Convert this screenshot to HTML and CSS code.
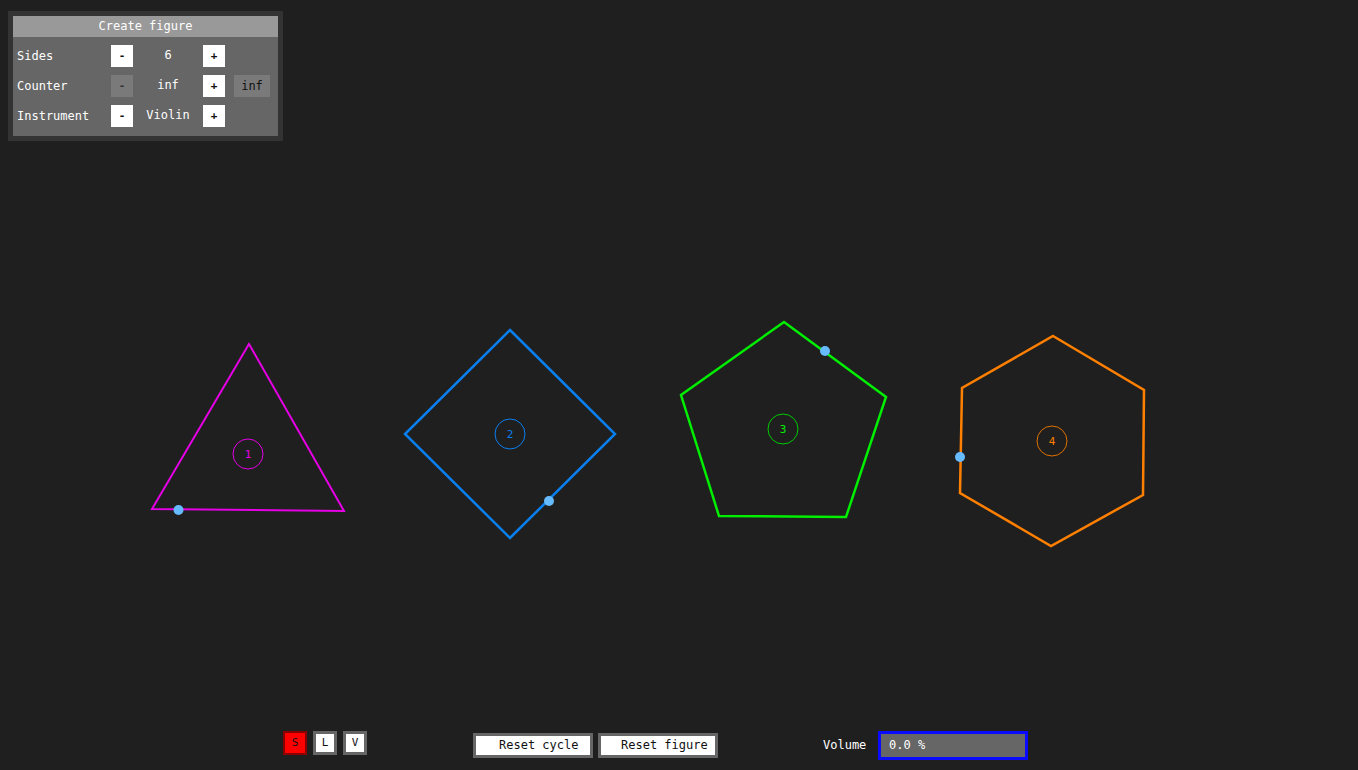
FILE: index.html
```html
<!DOCTYPE html>
<html>
<head>
<meta charset="utf-8">
<link rel="stylesheet" href="styles.css">
</head>
<body>
<div class="app">
  <svg class="stage" width="1358" height="770" viewBox="0 0 1358 770">
    <g class="fig">
      <polygon points="249,344 344,511 152,509" fill="none" stroke="#e600e6" stroke-width="2"/>
      <circle cx="248" cy="454" r="15" fill="none" stroke="#e600e6" stroke-width="1"/>
      <text x="248" y="458" fill="#e600e6" text-anchor="middle">1</text>
      <circle cx="178.5" cy="510" r="5" fill="#66bbff"/>
    </g>
    <g class="fig">
      <polygon points="510,330 615,434 510,538 405,434" fill="none" stroke="#0a7ff0" stroke-width="2.5"/>
      <circle cx="510" cy="434" r="15" fill="none" stroke="#0a7ff0" stroke-width="1"/>
      <text x="510" y="438" fill="#0a7ff0" text-anchor="middle">2</text>
      <circle cx="549" cy="501" r="5" fill="#66bbff"/>
    </g>
    <g class="fig">
      <polygon points="784,322 886,397 846,517 719,516 681,395" fill="none" stroke="#00ee00" stroke-width="2.5"/>
      <circle cx="783" cy="429" r="15" fill="none" stroke="#00cc00" stroke-width="1"/>
      <text x="783" y="433" fill="#00ee00" text-anchor="middle">3</text>
      <circle cx="825" cy="351" r="5" fill="#66bbff"/>
    </g>
    <g class="fig">
      <polygon points="1053,336 1144,390 1143,495 1051,546 960,493 962,388" fill="none" stroke="#ff8000" stroke-width="2.5"/>
      <circle cx="1052" cy="441" r="15" fill="none" stroke="#e07000" stroke-width="1"/>
      <text x="1052" y="445" fill="#ff8000" text-anchor="middle">4</text>
      <circle cx="960" cy="457" r="5" fill="#66bbff"/>
    </g>
  </svg>

  <div class="panel">
    <div class="panel-inner">
      <div class="panel-title">Create figure</div>
      <div class="panel-grid">
        <div class="lbl">Sides</div>
        <div class="btn">-</div>
        <div class="val">6</div>
        <div class="btn">+</div>
        <div></div>

        <div class="lbl">Counter</div>
        <div class="btn disabled">-</div>
        <div class="val">inf</div>
        <div class="btn">+</div>
        <div class="btn inf">inf</div>

        <div class="lbl">Instrument</div>
        <div class="btn">-</div>
        <div class="val">Violin</div>
        <div class="btn">+</div>
        <div></div>
      </div>
    </div>
  </div>

  <div class="spacer"></div>

  <div class="bottom">
    <div class="modes">
      <div class="mode active">S</div>
      <div class="mode">L</div>
      <div class="mode">V</div>
    </div>
    <div class="resets">
      <div class="reset">Reset cycle</div>
      <div class="reset">Reset figure</div>
    </div>
    <div class="volume">
      <span class="vol-lbl">Volume</span>
      <div class="vol-box">0.0 %</div>
    </div>
  </div>
</div>
</body>
</html>
```

FILE: styles.css
```css
* { box-sizing: border-box; }
html, body {
  margin: 0;
  padding: 0;
  background: #1f1f1f;
}
body {
  font-family: "DejaVu Sans Mono", "Liberation Mono", monospace;
  font-size: 12px;
  color: #fff;
}
.app {
  position: relative;
  width: 1358px;
  height: 770px;
  display: flex;
  flex-direction: column;
  overflow: hidden;
}
.stage {
  position: absolute;
  left: 0;
  top: 0;
  z-index: 0;
}
.stage text {
  font-family: "DejaVu Sans Mono", monospace;
  font-size: 11px;
}
.panel {
  position: relative;
  z-index: 1;
  margin: 11px 0 0 8px;
  width: 275px;
  height: 130px;
  background: #333333;
  padding: 5px;
}
.panel-inner {
  background: #666666;
  height: 120px;
}
.panel-title {
  height: 21px;
  background: #999999;
  color: #fff;
  text-align: center;
  line-height: 20px;
}
.panel-grid {
  display: grid;
  grid-template-columns: 94px 22px 70px 22px 45px;
  grid-auto-rows: 22px;
  row-gap: 8px;
  padding: 8px 0 0 4px;
  align-items: center;
}
.lbl {
  line-height: 22px;
  color: #fff;
}
.val {
  text-align: center;
  line-height: 20px;
  height: 22px;
}
.btn {
  width: 22px;
  height: 22px;
  background: #fff;
  color: #111;
  text-align: center;
  line-height: 22px;
  font-size: 11px;
  font-weight: bold;
}
.btn.disabled {
  background: #7a7a7a;
  color: #333;
}
.btn.inf {
  width: 36px;
  margin-left: 9px;
  background: #7a7a7a;
  color: #111;
  font-weight: normal;
  font-size: 12px;
}
.spacer { flex: 1; }
.bottom {
  position: relative;
  z-index: 1;
  height: 30px;
  display: flex;
  align-items: flex-start;
  margin-bottom: 9px;
}
.modes {
  display: flex;
  gap: 6px;
  margin-left: 283px;
}
.mode {
  width: 24px;
  height: 24px;
  border: 3px solid #666;
  background: #fff;
  color: #111;
  text-align: center;
  line-height: 18px;
  font-size: 11px;
}
.mode.active {
  background: #ff0000;
  border: 2px solid #880000;
  line-height: 20px;
}
.resets {
  display: flex;
  gap: 5px;
  margin-left: 106px;
  margin-top: 2px;
}
.reset {
  width: 120px;
  height: 25px;
  border: 3px solid #666;
  background: #fff;
  color: #111;
  padding-left: 23px;
  line-height: 19px;
}
.reset + .reset { padding-left: 20px; }
.volume {
  display: flex;
  align-items: center;
  margin-left: 105px;
}
.vol-lbl {
  color: #fff;
  width: 55px;
  line-height: 29px;
}
.vol-box {
  width: 150px;
  height: 29px;
  border: 3px solid #0a0aff;
  background: #666;
  color: #fff;
  padding-left: 8px;
  line-height: 23px;
}
```
